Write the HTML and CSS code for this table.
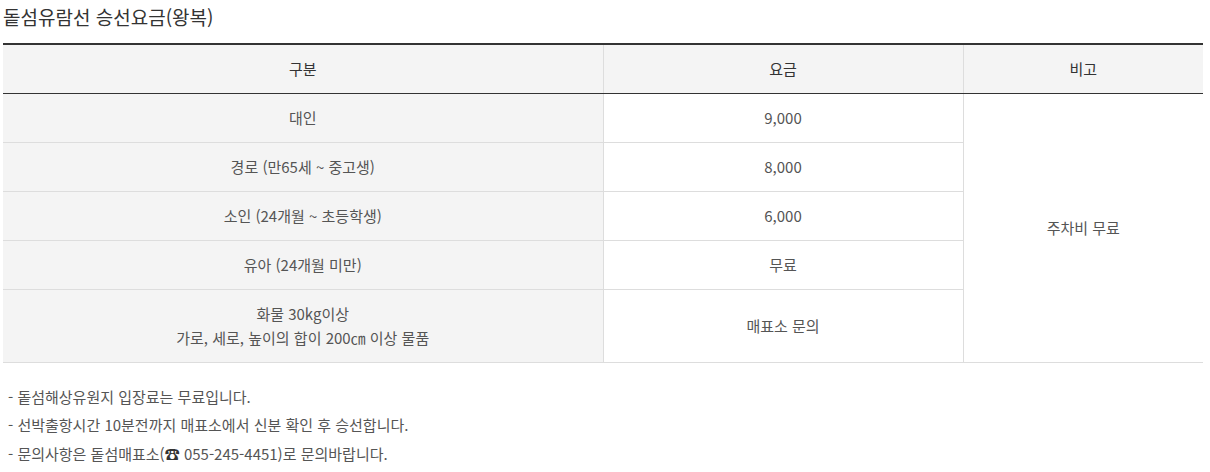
FILE: index.html
```html
<!DOCTYPE html>
<html lang="ko">
<head>
<meta charset="utf-8">
<title>돝섬유람선 승선요금</title>
<link rel="stylesheet" href="styles.css">
</head>
<body>
<div class="wrap">
  <h2 class="title">돝섬유람선 승선요금(왕복)</h2>
  <table class="fare">
    <colgroup>
      <col class="c1"><col class="c2"><col class="c3">
    </colgroup>
    <thead>
      <tr><th>구분</th><th>요금</th><th>비고</th></tr>
    </thead>
    <tbody>
      <tr><td class="cat">대인</td><td>9,000</td><td class="note" rowspan="5">주차비 무료</td></tr>
      <tr><td class="cat">경로 (만65세 ~ 중고생)</td><td>8,000</td></tr>
      <tr><td class="cat">소인 (24개월 ~ 초등학생)</td><td>6,000</td></tr>
      <tr><td class="cat">유아 (24개월 미만)</td><td>무료</td></tr>
      <tr><td class="cat">화물 30kg이상<br>가로, 세로, 높이의 합이 200㎝ 이상 물품</td><td>매표소 문의</td></tr>
    </tbody>
  </table>
  <ul class="notes">
    <li>- 돝섬해상유원지 입장료는 무료입니다.</li>
    <li>- 선박출항시간 10분전까지 매표소에서 신분 확인 후 승선합니다.</li>
    <li>- 문의사항은 돝섬매표소(<span class="tel">☎</span> 055-245-4451)로 문의바랍니다.</li>
  </ul>
</div>
</body>
</html>
```
FILE: styles.css
```css
html, body {
  margin: 0;
  padding: 0;
  background: #fff;
}
body {
  font-family: "Noto Sans CJK KR", "Noto Sans", sans-serif;
  color: #555;
}
.wrap {
  padding: 0 7px 0 3px;
}
.title {
  margin: 3px 0 12px;
  font-size: 19px;
  line-height: 28px;
  font-weight: 400;
  color: #333;
}
.fare {
  width: 1200px;
  border-collapse: collapse;
  table-layout: fixed;
  border-top: 2px solid #333;
  border-bottom: 1px solid #ddd;
}
.c1 { width: 600px; }
.c2 { width: 360px; }
.c3 { width: 240px; }
.fare th, .fare td {
  font-size: 15px;
  line-height: 24px;
  padding: 12.4px 0 11.6px;
  text-align: center;
  vertical-align: middle;
  border-left: 1px solid #ddd;
  border-bottom: 1px solid #ddd;
}
.fare th:first-child, .fare td.cat {
  border-left: none;
}
.fare th {
  background: #f4f4f4;
  color: #333;
  font-weight: 400;
  border-bottom: 1px solid #333;
}
.fare td {
  color: #555;
  background: #fff;
}
.fare td.cat {
  background: #f4f4f4;
}
.notes {
  list-style: none;
  margin: 20px 0 0;
  padding: 0 0 0 5px;
  font-size: 15px;
  line-height: 28.5px;
  color: #555;
}
.tel {
  color: #333;
}
```
